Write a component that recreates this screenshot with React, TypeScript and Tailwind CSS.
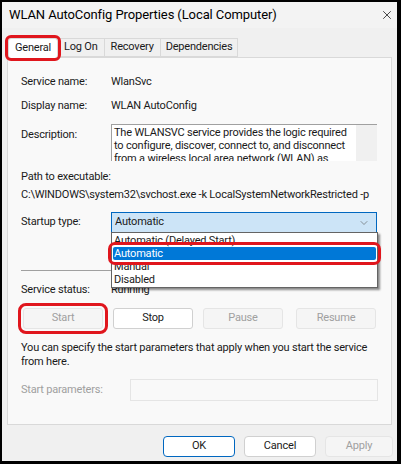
import { X, ChevronDown } from "lucide-react";

const font = { fontFamily: "Roboto, 'Noto Sans', sans-serif" };

function Row({ label, value }: { label: string; value: string }) {
  return (
    <div className="flex h-[24px] items-center">
      <span className="w-[90px]">{label}</span>
      <span>{value}</span>
    </div>
  );
}

function Btn({
  label,
  disabled,
  highlight,
}: {
  label: string;
  disabled?: boolean;
  highlight?: boolean;
}) {
  return (
    <div
      className={`flex h-[21px] w-[80px] items-center justify-center rounded-[3px] border ${
        disabled
          ? "border-[#e5e5e5] bg-[#f5f5f5] text-[#a0a0a0]"
          : "border-[#d0d0d0] bg-white text-[#1a1a1a]"
      } ${highlight ? "outline-[3px] outline-offset-[2px] outline-[#e0161d] outline rounded-[3px]" : ""}`}
    >
      {label}
    </div>
  );
}

export default function App() {
  return (
    <div
      className="h-[464px] w-[401px] bg-black pt-[2px] pl-[2px] pr-[4px] pb-[3px] text-[11px] tracking-[-0.2px] text-[#1a1a1a]"
      style={font}
    >
      <div className="flex h-full flex-col bg-[#f0f0f0]">
        {/* title bar */}
        <div className="flex h-[26px] items-center justify-between bg-[#f3f3f3] pl-[7px] pr-[3px]">
          <span className="text-[13px] tracking-[-0.1px] text-black">
            WLAN AutoConfig Properties (Local Computer)
          </span>
          <X size={14} strokeWidth={1.2} className="text-black" />
        </div>

        {/* tabs */}
        <div className="flex h-[29px] items-end px-[6px]">
          <div className="relative z-10 -mb-px flex h-[20px] items-center border border-b-0 border-[#d9d9d9] bg-white px-[6px] outline-[3px] outline-[#e0161d] outline rounded-[3px]">
            General
          </div>
          <div className="flex h-[19px] items-center border border-l-0 border-[#d9d9d9] bg-[#f0f0f0] px-[6px]">
            Log On
          </div>
          <div className="flex h-[19px] items-center border border-l-0 border-[#d9d9d9] bg-[#f0f0f0] px-[6px]">
            Recovery
          </div>
          <div className="flex h-[19px] items-center border border-l-0 border-[#d9d9d9] bg-[#f0f0f0] px-[5px]">
            Dependencies
          </div>
        </div>

        {/* panel */}
        <div className="relative mx-[5px] flex h-[368px] flex-col border border-[#d9d9d9] bg-[#f9f9f9] px-[13px] pt-[12px]">
          <Row label="Service name:" value="WlanSvc" />
          <Row label="Display name:" value="WLAN AutoConfig" />
          <div className="mt-[6px] flex">
            <span className="w-[90px] pt-[3px]">Description:</span>
            <div className="flex h-[37px] w-[266px] overflow-hidden border-t border-l border-[#a0a0a0] bg-white">
              <p className="w-[244px] pl-[2px] pt-[1px] leading-[13px]">
                The WLANSVC service provides the logic required to configure,
                discover, connect to, and disconnect from a wireless local area
                network (WLAN) as
              </p>
              <div className="flex-1 bg-[#f0f0f0]" />
            </div>
          </div>
          <div className="mt-[7px] leading-[18px]">Path to executable:</div>
          <div className="whitespace-nowrap leading-[18px]">
            C:\WINDOWS\system32\svchost.exe -k LocalSystemNetworkRestricted -p
          </div>
          <div className="relative mt-[8px] flex items-center">
            <span className="w-[90px]">Startup type:</span>
            <div className="flex h-[21px] w-[266px] items-center justify-between border border-[#0067c0] bg-[#cce4f7] pl-[3px] pr-[6px]">
              <span>Automatic</span>
              <ChevronDown size={12} strokeWidth={1.2} className="text-[#555]" />
            </div>
            {/* open dropdown list */}
            <div className="absolute left-[90px] top-[20px] z-20 w-[267px] border border-[#646464] bg-white py-[1px] shadow-[2px_2px_2px_rgba(0,0,0,0.45)]">
              <div className="h-[13px] pl-[2px] leading-[13px]">
                Automatic (Delayed Start)
              </div>
              <div className="mx-[1px] h-[13px] bg-[#0078d7] pl-[1px] leading-[13px] text-white outline outline-[3px] outline-offset-[2px] outline-[#e0161d] rounded-[2px]">
                Automatic
              </div>
              <div className="h-[13px] pl-[2px] leading-[13px]">Manual</div>
              <div className="h-[13px] pl-[2px] leading-[13px]">Disabled</div>
            </div>
          </div>
          <div className="mt-[37px] h-px w-[356px] bg-[#a0a0a0]" />
          <div className="mt-[11px] flex h-[16px] items-center">
            <span className="w-[90px]">Service status:</span>
            <span>Running</span>
          </div>
          <div className="mt-[10px] flex gap-[10px] pl-[2px]">
            <Btn label="Start" disabled highlight />
            <Btn label="Stop" />
            <Btn label="Pause" disabled />
            <div className="ml-[3px]">
              <Btn label="Resume" disabled />
            </div>
          </div>
          <p className="mt-[12px] leading-[14px]">
            You can specify the start parameters that apply when you start the
            service
            <br />
            from here.
          </p>
          <div className="mt-[10px] flex items-center">
            <span className="w-[109px] text-[#a0a0a0]">Start parameters:</span>
            <div className="h-[22px] w-[248px] border border-[#e5e5e5] bg-[#f9f9f9]" />
          </div>
        </div>

        {/* footer */}
        <div className="flex flex-1 items-center justify-end gap-[9px] pr-[4px] pt-[6px]">
          <div className="flex h-[21px] w-[72px] items-center justify-center rounded-[4px] border border-[#0067c0] bg-white">
            OK
          </div>
          <div className="flex h-[21px] w-[72px] items-center justify-center rounded-[4px] border border-[#d0d0d0] bg-white">
            Cancel
          </div>
          <div className="flex h-[21px] w-[68px] items-center justify-center rounded-[4px] border border-[#e5e5e5] bg-[#f5f5f5] text-[#a0a0a0]">
            Apply
          </div>
        </div>
      </div>
    </div>
  );
}
